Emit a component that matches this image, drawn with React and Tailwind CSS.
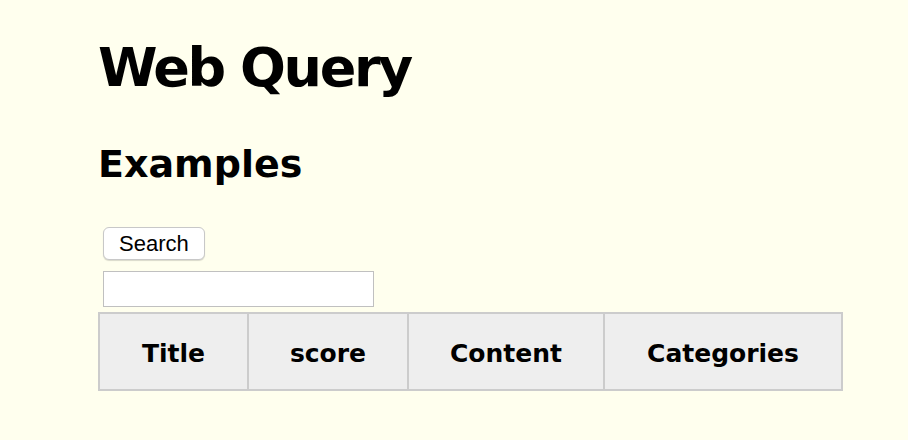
import React from 'react'

function App() {
  const columns = [
    { label: 'Title', w: 'w-[149px]' },
    { label: 'score', w: 'w-[160px]' },
    { label: 'Content', w: 'w-[196px]' },
    { label: 'Categories', w: 'w-[238px]' },
  ]

  return (
    <div className="min-h-[440px] bg-[#ffffee] pl-[98px] pt-[34px] text-black" style={{ fontFamily: '"DejaVu Sans", sans-serif' }}>
      <h1 className="text-[54px] font-bold leading-[68px] tracking-[-2.4px]">Web Query</h1>
      <h2 className="mt-[38px] text-[38px] font-bold leading-[48px]">Examples</h2>

      <div className="mt-[39px] flex flex-col items-start pl-[5px]">
        <button className="h-[33px] rounded-[6px] border border-[#c8c8c8] bg-white px-[15px] text-[22px] leading-none shadow-[0_1px_1px_rgba(0,0,0,0.15)]" style={{ fontFamily: '"Liberation Sans", Arial, sans-serif' }}>
          Search
        </button>
        <input type="text" className="mt-[11px] h-[36px] w-[271px] border border-[#c0c0c0] bg-white" />
      </div>

      <table className="mt-[5px] border-collapse">
        <thead>
          <tr>
            {columns.map(col => (
              <th key={col.label} className={`${col.w} h-[77px] border-2 border-[#cccccc] bg-[#eeeeee] pt-[4px] text-center text-[25px] font-bold`}>
                {col.label}
              </th>
            ))}
          </tr>
        </thead>
      </table>
    </div>
  )
}

export default App
